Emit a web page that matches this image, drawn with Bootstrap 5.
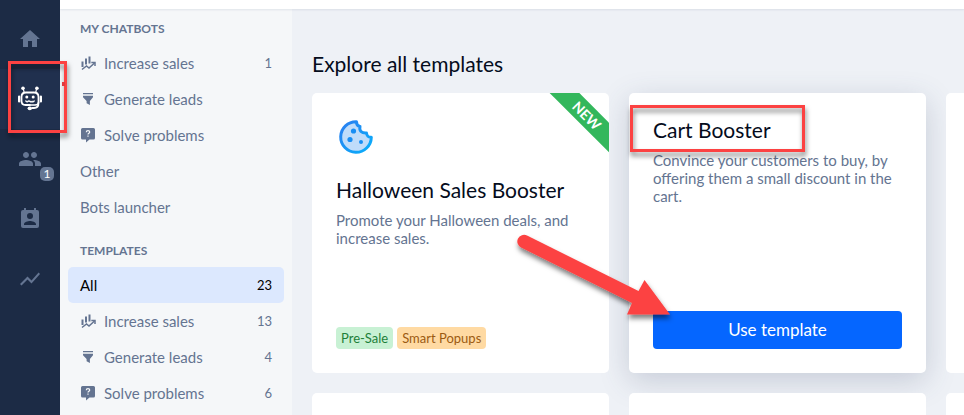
<!DOCTYPE html>
<html lang="en">
<head>
<meta charset="utf-8">
<meta name="viewport" content="width=device-width, initial-scale=1">
<title>Chatbot templates</title>
<link href="https://cdn.jsdelivr.net/npm/bootstrap@5.3.0/dist/css/bootstrap.min.css" rel="stylesheet">
<style>
body{font-family:Lato,"Open Sans",sans-serif;font-size:15px;line-height:18px;color:#647491;background:#eef1f6}
a{color:inherit;text-decoration:none}
.rail{width:60px;background:#1c2b45;padding-top:9px;color:#647592}
.rail a{height:60px}
.rail a.current{background:#20304e;color:#fff}
.count-bubble{right:6px;bottom:8px;min-width:14px;height:14px;border-radius:5px;background:#647592;color:#fff;font-size:12px;line-height:14px;text-align:center}
.topbar{height:9px;background:#fff;box-shadow:0 1px 2px rgba(40,60,100,.1);z-index:2}
.side-menu{width:232px;background:#f5f7f9;padding:11px 8px;flex:none}
.side-menu h2{font-size:12px;line-height:18px;font-weight:700;margin:0;padding:0 12px 7px}
.side-menu ul + h2{padding-top:17px}
.side-menu li a{height:36px;padding:0 12px;border-radius:5px}
.side-menu li a.current{background:#dce8fe;color:#000}
.side-menu .tally{font-size:13px}
.menu-icon{width:16px;height:16px;margin-right:8px}
.page-title,.tile-title{color:#050c1c;font-size:21px;line-height:26px;font-weight:400;margin:0}
.page-title{padding:42px 20px 16px}
.tiles{gap:20px;padding-left:20px}
.tile{flex:0 0 297px;min-height:280px;border:0;border-radius:5px;padding:24px;overflow:hidden}
.tile.raised{box-shadow:0 8px 30px rgba(60,75,110,.22);z-index:0}
.tile:not(.raised){z-index:1}
.tile p{margin:8px 0 0}
.ribbon{top:12px;right:-28px;width:100px;height:21px;background:#33b75c;color:#fff;font-size:14px;line-height:21px;font-weight:700;text-align:center;transform:rotate(45deg)}
.cookie{width:40px;height:40px;margin-bottom:20px}
.tag{font-size:13px;line-height:22px;padding:0 5px;border-radius:4px}
.tag-green{background:#c8f1d4;color:#1d7f39}
.tag-orange{background:#ffdaa3;color:#9c5a12}
.btn-use{background:#0566ff;color:#fff;font-size:17px;line-height:24px;padding:7px;border:0;border-radius:4px}
.notes{pointer-events:none;z-index:5}
.tile-rows{gap:20px}
</style>
<script src="https://cdn.jsdelivr.net/npm/bootstrap@5.3.0/dist/js/bootstrap.bundle.min.js"></script>
</head>
<body class="vh-100 overflow-hidden position-relative">
<svg class="d-none" aria-hidden="true">
  <symbol id="i-sales" viewBox="0 0 16 16"><g fill="none" stroke="currentColor"><path d="M2.500 6.500v5.500M6 3.500v6M9.500 1.500v7" stroke-width="2"/><path d="M2 14.500l4.500-3.500 2.500 2L14.500 8" stroke-width="1.500"/><path d="M11.300 7.500H15V11" stroke-width="1.500"/></g></symbol>
  <symbol id="i-leads" viewBox="0 0 16 16"><path fill="currentColor" d="M3 2h10v1.300H3zM3 4.800h10v1.400L9.900 10v4L6.600 12.300V10L3 6.200z"/></symbol>
  <symbol id="i-help" viewBox="0 0 16 16"><path fill="currentColor" d="M2.500 1h11Q15 1 15 2.500v8.500q0 1.500-1.500 1.500H9.500L6 15.500v-3H2.500Q1 12.500 1 11V2.500Q1 1 2.500 1z"/><path d="M6.300 5.200q0-1.600 1.700-1.600t1.700 1.400c0 1.300-1.700 1-1.700 2.500M8 8.400v1.400" fill="none" stroke="#f5f7f9" stroke-width="1.200"/></symbol>
</svg>
<div class="d-flex h-100">
  <nav class="rail d-flex flex-column flex-shrink-0" aria-label="Main">
    <a href="#" class="d-flex align-items-center justify-content-center" aria-label="Home"><svg width="24" height="24" viewBox="0 0 24 24" fill="currentColor"><path d="M10 20v-6h4v6h5v-8h3L12 3 2 12h3v8z"/></svg></a>
    <a href="#" class="current d-flex align-items-center justify-content-center" aria-label="Chatbots"><svg width="26" height="26" viewBox="0 0 26 26" fill="none" stroke="currentColor"><path d="M13.500 19H8.500Q4.500 19 4.500 15V11Q4.500 6.500 9 6.500H17Q21.500 6.500 21.500 11V17Q21.500 22 17 22H14.500" stroke-width="1.800"/><path d="M21.500 16q0 3-3.500 3H13" stroke-width="1.600"/><path d="M6.200 2.500l1 4M19.700 2.500l-1 4" stroke-width="1.100"/><path d="M2.100 10.500v5M23.900 10.500v5" stroke-width="2.200" stroke-linecap="round"/><path d="M8.500 14.500q1 2 2.300.9 1.100-.8 2.200 0t2.200 0q1.300 1.100 2.300-.9" stroke-width="1.300"/><g fill="currentColor" stroke="none"><circle cx="6" cy="2.300" r="1.800"/><circle cx="19.900" cy="2.300" r="1.800"/><circle cx="9.800" cy="11" r="1.500"/><circle cx="16.200" cy="11" r="1.500"/><ellipse cx="12.800" cy="22.300" rx="2.200" ry="1.900"/></g></svg></a>
    <a href="#" class="position-relative d-flex align-items-center justify-content-center" aria-label="Customers"><svg width="24" height="24" viewBox="0 0 24 24" fill="currentColor"><path d="M16 11c1.660 0 2.990-1.340 2.990-3S17.660 5 16 5s-3 1.340-3 3 1.340 3 3 3zm-8 0c1.660 0 2.990-1.340 2.990-3S9.660 5 8 5 5 6.340 5 8s1.340 3 3 3zm0 2c-2.330 0-7 1.170-7 3.500V19h14v-2.500C15 14.170 10.330 13 8 13zm8 0c-.29 0-.62.02-.97.05 1.160.84 1.970 1.970 1.970 3.450V19h6v-2.500c0-2.330-4.670-3.500-7-3.500z"/></svg><span class="count-bubble position-absolute">1</span></a>
    <a href="#" class="d-flex align-items-center justify-content-center" aria-label="Contacts"><svg width="24" height="24" viewBox="0 0 24 24" fill="currentColor"><path d="M19 3h-1V1h-2v2H8V1H6v2H5a2 2 0 0 0-2 2v14a2 2 0 0 0 2 2h14a2 2 0 0 0 2-2V5a2 2 0 0 0-2-2zm-7 3a3 3 0 1 1 0 6 3 3 0 0 1 0-6zm6 12H6v-1c0-2 4-3.100 6-3.100s6 1.100 6 3.100z"/></svg></a>
    <a href="#" class="d-flex align-items-center justify-content-center" aria-label="Analytics"><svg width="24" height="24" viewBox="0 0 24 24" fill="currentColor"><path d="M3.500 18.490l6-6.010 4 4L22 6.920l-1.410-1.410-7.090 7.970-4-4L2 16.990z"/></svg></a>
  </nav>
  <div class="d-flex flex-column flex-grow-1 overflow-hidden">
    <header class="topbar flex-shrink-0"></header>
    <div class="d-flex flex-grow-1 overflow-hidden">
      <aside class="side-menu">
        <h2>MY CHATBOTS</h2>
        <ul class="list-unstyled m-0">
          <li><a href="#" class="d-flex align-items-center"><svg class="menu-icon"><use href="#i-sales"/></svg>Increase sales<span class="tally ms-auto">1</span></a></li>
          <li><a href="#" class="d-flex align-items-center"><svg class="menu-icon"><use href="#i-leads"/></svg>Generate leads</a></li>
          <li><a href="#" class="d-flex align-items-center"><svg class="menu-icon"><use href="#i-help"/></svg>Solve problems</a></li>
          <li><a href="#" class="d-flex align-items-center">Other</a></li>
          <li><a href="#" class="d-flex align-items-center">Bots launcher</a></li>
        </ul>
        <h2>TEMPLATES</h2>
        <ul class="list-unstyled m-0">
          <li><a href="#" class="current d-flex align-items-center">All<span class="tally ms-auto">23</span></a></li>
          <li><a href="#" class="d-flex align-items-center"><svg class="menu-icon"><use href="#i-sales"/></svg>Increase sales<span class="tally ms-auto">13</span></a></li>
          <li><a href="#" class="d-flex align-items-center"><svg class="menu-icon"><use href="#i-leads"/></svg>Generate leads<span class="tally ms-auto">4</span></a></li>
          <li><a href="#" class="d-flex align-items-center"><svg class="menu-icon"><use href="#i-help"/></svg>Solve problems<span class="tally ms-auto">6</span></a></li>
        </ul>
      </aside>
      <main class="flex-grow-1 overflow-hidden">
        <h1 class="page-title">Explore all templates</h1>
        <div class="tile-rows d-flex flex-column">
          <div class="tiles d-flex">
            <article class="tile card">
              <span class="ribbon position-absolute">NEW</span>
              <svg class="cookie" viewBox="0 0 40 40"><defs><linearGradient id="blue" x1="0" y1="0" x2="1" y2="1"><stop stop-color="#2b7df0"/><stop offset="1" stop-color="#08b0fb"/></linearGradient></defs><path d="M20.500 4.700a15.300 15.300 0 1 0 14.800 15.500c-3 .3-4.600-1.400-4.800-4.200-5 .3-7.500-2.200-6.500-6.500-2.500-.5-3.600-2.300-3.500-4.800z" fill="#bfdcfa" stroke="url(#blue)" stroke-width="3" stroke-linejoin="round"/><g fill="#188ef4"><circle cx="17.500" cy="14" r="2.600"/><circle cx="14" cy="22.500" r="2.600"/><circle cx="25" cy="25" r="2"/></g></svg>
              <h3 class="tile-title">Halloween Sales Booster</h3>
              <p>Promote your Halloween deals, and increase sales.</p>
              <div class="d-flex gap-1 mt-auto"><span class="tag tag-green">Pre-Sale</span><span class="tag tag-orange">Smart Popups</span></div>
            </article>
            <article class="tile raised card">
              <h3 class="tile-title">Cart Booster</h3>
              <p>Convince your customers to buy, by offering them a small discount in the cart.</p>
              <button type="button" class="btn btn-use w-100 mt-auto">Use template</button>
            </article>
            <article class="tile card"></article>
          </div>
          <div class="tiles d-flex">
            <article class="tile card"></article><article class="tile card"></article><article class="tile card"></article>
          </div>
        </div>
      </main>
    </div>
  </div>
</div>
<svg class="notes position-absolute top-0 start-0" width="964" height="415" viewBox="0 0 964 415" aria-hidden="true">
  <defs><filter id="soft" x="-20%" y="-20%" width="140%" height="150%"><feDropShadow dx="1" dy="4" stdDeviation="2.500" flood-color="#000" flood-opacity=".5"/></filter></defs>
  <g filter="url(#soft)" fill="none" stroke="#fc4343" stroke-width="3"><rect x="9.500" y="62.500" width="56" height="69"/><rect x="631.500" y="106.500" width="172" height="44"/></g>
  <path d="M62 82h3v4h-3z" fill="#e03a3e"/>
  <path filter="url(#soft)" fill="#fc4343" d="M527 235.500L638.500 291 644.500 280 670 314.500 627 314.500 632 303 521 247.500A6.700 6.700 0 0 1 527 235.500z"/>
</svg>
</body>
</html>
